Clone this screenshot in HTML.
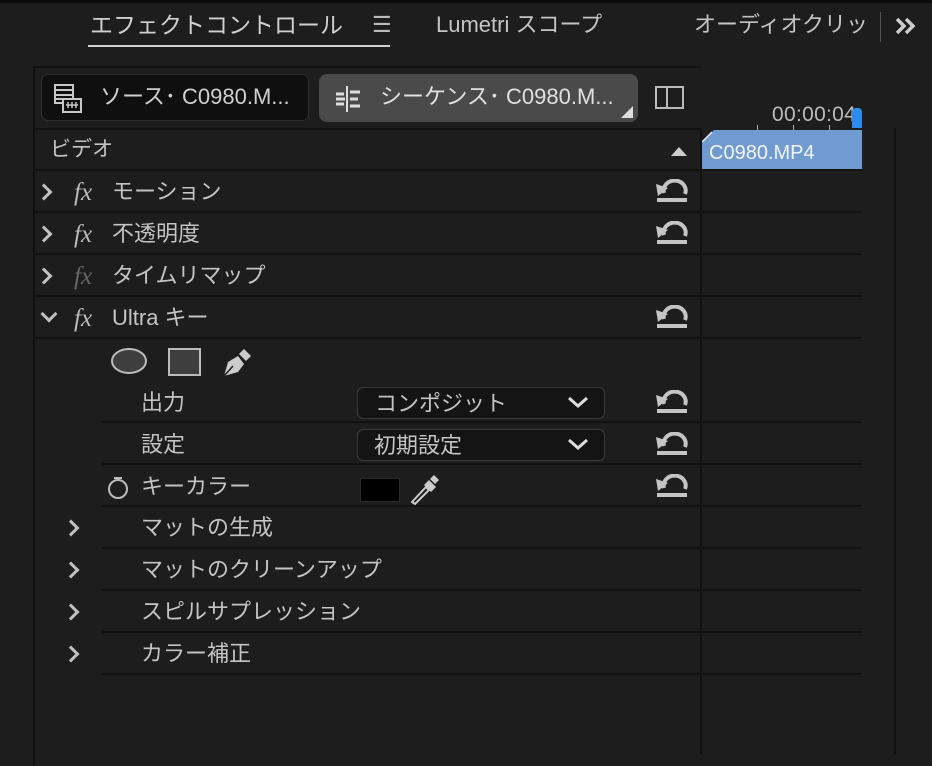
<!DOCTYPE html><html><head><meta charset="utf-8"><style>
body{margin:0;width:932px;height:754px;background:#1d1d1d;overflow:hidden;position:relative;font-family:"Liberation Sans","Noto Sans CJK JP",sans-serif;color:#c4c4c4}
.a{position:absolute}
.t{position:absolute;font-size:22px;white-space:nowrap;line-height:1}
.ln{position:absolute;height:2px;background:#121212}
.chev{position:absolute;width:9px;height:9px;border-right:3px solid #c0c0c0;border-bottom:3px solid #c0c0c0;transform:rotate(-45deg)}
.fx{position:absolute;font-family:"Liberation Serif",serif;font-style:italic;font-size:25px;color:#bbb}
.dd{position:absolute;left:357px;width:246px;height:30px;border:1px solid #3a3a3a;border-radius:6px;background:#141414}
</style></head><body>
<div class="a" style="left:0;top:0;width:932px;height:3px;background:#0b0b0b"></div>
<div class="t" style="left:90px;top:14px;font-size:23px;color:#d0d0d0">エフェクトコントロール</div>
<div class="t" style="left:372px;top:14px;font-size:22px;color:#bbb">☰</div>
<div class="a" style="left:88px;top:45px;width:302px;height:2px;background:#d0d0d0"></div>
<div class="t" style="left:436px;top:14px;font-size:22px">Lumetri スコープ</div>
<div class="t" style="left:694px;top:14px;font-size:22px">オーディオクリッ</div>
<div class="a" style="left:880px;top:12px;width:1px;height:30px;background:#555"></div>
<svg class="a" style="left:895px;top:17px" width="22" height="18"><path d="M2 2l7 7l-7 7M11 2l7 7l-7 7" fill="none" stroke="#ccc" stroke-width="3.5"/></svg>
<!-- panel -->
<div class="a" style="left:33px;top:66px;width:668px;height:700px;border-left:2px solid #111;border-top:2px solid #111;box-sizing:border-box"></div>
<div class="a" style="left:700px;top:128px;width:2px;height:626px;background:#111"></div>
<div class="a" style="left:894px;top:128px;width:2px;height:626px;background:#111"></div>
<!-- source button -->
<div class="a" style="left:41px;top:74px;width:268px;height:47px;background:#0f0f0f;border:1px solid #2d2d2d;border-radius:7px;box-sizing:border-box"></div>
<svg class="a" style="left:54px;top:84px" width="30" height="30"><rect x="1" y="1" width="18" height="18" fill="none" stroke="#c8c8c8" stroke-width="2"/><path d="M1 6h18M1 11h18M1 15h18" stroke="#c8c8c8" stroke-width="2"/><rect x="9" y="15" width="18" height="13" fill="#0f0f0f" stroke="#c8c8c8" stroke-width="2"/><path d="M12 21h12M14 18v6M18 18v6M22 18v6" stroke="#c8c8c8" stroke-width="1.5"/></svg>
<div class="t" style="left:100px;top:86px;font-size:22px;color:#d0d0d0">ソース･ C0980.M...</div>
<div class="a" style="left:319px;top:74px;width:319px;height:48px;background:#4a4a4a;border-radius:8px"></div>
<svg class="a" style="left:334px;top:84px" width="30" height="30"><path d="M13 2v26" stroke="#ddd" stroke-width="2"/><path d="M2 10h8M16 8h10M2 15h9M16 15h8M2 20h8M16 22h10" stroke="#ddd" stroke-width="3"/></svg>
<div class="t" style="left:380px;top:86px;font-size:22px;color:#e0e0e0">シーケンス･ C0980.M...</div>
<svg class="a" style="left:621px;top:106px" width="12" height="12"><path d="M0 12L12 0V12Z" fill="#ddd"/></svg>
<svg class="a" style="left:655px;top:86px" width="30" height="24"><rect x="1" y="1" width="27" height="21" fill="none" stroke="#bbb" stroke-width="2"/><path d="M12 1v21" stroke="#bbb" stroke-width="2"/></svg>
<!-- timeline -->
<div class="t" style="left:772px;top:104px;font-size:21px;color:#bbb;letter-spacing:0.3px">00:00:04</div>
<div class="a" style="left:852px;top:108px;width:10px;height:20px;background:#2d8ceb;border-radius:4px 4px 0 0"></div>
<div class="a" style="left:757px;top:125px;width:1px;height:6px;background:#aaa"></div>
<div class="a" style="left:793px;top:125px;width:1px;height:6px;background:#aaa"></div>
<div class="a" style="left:829px;top:125px;width:1px;height:6px;background:#aaa"></div>
<div class="a" style="left:702px;top:130px;width:160px;height:40px;background:#6f9bd1"></div>
<svg class="a" style="left:702px;top:130px" width="12" height="12"><path d="M0 0h12L0 12Z" fill="#1d1d1d"/><path d="M0 12L10 2" stroke="#eee" stroke-width="1.5"/></svg>
<div class="t" style="left:709px;top:143px;font-size:20px;color:#f4f4f4">C0980.MP4</div>
<!-- header -->
<div class="a" style="left:35px;top:128px;width:666px;height:2px;background:#111"></div>
<div class="t" style="left:50px;top:139px;font-size:21px">ビデオ</div>
<svg class="a" style="left:669px;top:145px" width="20" height="12"><path d="M2 11L10 2L18 11Z" fill="#ccc"/></svg>
<div class="ln" style="left:35px;top:169px;width:827px"></div>
<div class="ln" style="left:35px;top:211px;width:827px"></div>
<div class="ln" style="left:35px;top:253px;width:827px"></div>
<div class="ln" style="left:35px;top:295px;width:827px"></div>
<div class="ln" style="left:35px;top:337px;width:827px"></div>
<div class="ln" style="left:102px;top:421px;width:760px"></div>
<div class="ln" style="left:102px;top:463px;width:760px"></div>
<div class="ln" style="left:102px;top:505px;width:760px"></div>
<div class="ln" style="left:102px;top:547px;width:760px"></div>
<div class="ln" style="left:102px;top:589px;width:760px"></div>
<div class="ln" style="left:102px;top:631px;width:760px"></div>
<div class="ln" style="left:102px;top:673px;width:760px"></div>
<!-- rows -->
<div class="chev" style="left:38px;top:186px"></div><div class="fx" style="left:74px;top:179px">fx</div><div class="t" style="left:112px;top:181px">モーション</div>
<div class="chev" style="left:38px;top:228px"></div><div class="fx" style="left:74px;top:221px">fx</div><div class="t" style="left:112px;top:223px">不透明度</div>
<div class="chev" style="left:38px;top:270px"></div><div class="fx" style="left:74px;top:263px;color:#666">fx</div><div class="t" style="left:112px;top:265px">タイムリマップ</div>
<div class="chev" style="left:43px;top:308px;transform:rotate(45deg)"></div><div class="fx" style="left:74px;top:305px">fx</div><div class="t" style="left:112px;top:307px">Ultra キー</div>
<svg class="a" style="left:110px;top:346px" width="150" height="32"><ellipse cx="19" cy="15" rx="17" ry="12" fill="#3e3e3e" stroke="#bbb" stroke-width="2"/><rect x="59" y="3" width="31" height="26" fill="#3e3e3e" stroke="#bbb" stroke-width="2"/><path d="M114 30L118 16L128 10L134 18L128 26Z" fill="#ccc"/><path d="M129 8L134 3L141 10L136 15Z" fill="#ccc"/><path d="M114 30L123 20" stroke="#1d1d1d" stroke-width="1.5"/></svg>
<div class="t" style="left:141px;top:392px">出力</div>
<div class="dd" style="top:387px"></div><div class="t" style="left:375px;top:393px">コンポジット</div>
<div class="t" style="left:141px;top:434px">設定</div>
<div class="dd" style="top:429px"></div><div class="t" style="left:374px;top:435px">初期設定</div>
<svg class="a" style="left:566px;top:395px" width="24" height="14"><path d="M3 3l9 8l9-8" fill="none" stroke="#ddd" stroke-width="3"/></svg>
<svg class="a" style="left:566px;top:437px" width="24" height="14"><path d="M3 3l9 8l9-8" fill="none" stroke="#ddd" stroke-width="3"/></svg>
<svg class="a" style="left:106px;top:474px" width="24" height="26"><circle cx="12" cy="15" r="9" fill="none" stroke="#bbb" stroke-width="2"/><path d="M8 4h8" stroke="#bbb" stroke-width="2"/></svg>
<div class="t" style="left:141px;top:476px">キーカラー</div>
<div class="a" style="left:360px;top:478px;width:38px;height:22px;background:#000;border:1px solid #2a2a2a"></div>
<svg class="a" style="left:408px;top:474px" width="32" height="32"><path d="M4 28L18 13L21 16L7 30Z" fill="none" stroke="#ccc" stroke-width="2"/><path d="M16 11L21 6L28 13L23 18Z" fill="#ccc"/><path d="M22 5L26 1L31 6L27 10Z" fill="#ccc"/></svg>
<div class="chev" style="left:65px;top:522px"></div><div class="t" style="left:141px;top:517px">マットの生成</div>
<div class="chev" style="left:65px;top:564px"></div><div class="t" style="left:141px;top:559px">マットのクリーンアップ</div>
<div class="chev" style="left:65px;top:606px"></div><div class="t" style="left:141px;top:601px">スピルサプレッション</div>
<div class="chev" style="left:65px;top:648px"></div><div class="t" style="left:141px;top:643px">カラー補正</div>
<!-- reset icons -->
<svg class="a" style="left:655px;top:179px" width="34" height="24"><path d="M9 14A11 10 0 1 1 30 15" fill="none" stroke="#c4c4c4" stroke-width="4"/><path d="M1 5L13 9L3 17Z" fill="#c4c4c4"/><rect x="2" y="19" width="30" height="4" fill="#c4c4c4"/></svg>
<svg class="a" style="left:655px;top:221px" width="34" height="24"><path d="M9 14A11 10 0 1 1 30 15" fill="none" stroke="#c4c4c4" stroke-width="4"/><path d="M1 5L13 9L3 17Z" fill="#c4c4c4"/><rect x="2" y="19" width="30" height="4" fill="#c4c4c4"/></svg>
<svg class="a" style="left:655px;top:305px" width="34" height="24"><path d="M9 14A11 10 0 1 1 30 15" fill="none" stroke="#c4c4c4" stroke-width="4"/><path d="M1 5L13 9L3 17Z" fill="#c4c4c4"/><rect x="2" y="19" width="30" height="4" fill="#c4c4c4"/></svg>
<svg class="a" style="left:655px;top:390px" width="34" height="24"><path d="M9 14A11 10 0 1 1 30 15" fill="none" stroke="#c4c4c4" stroke-width="4"/><path d="M1 5L13 9L3 17Z" fill="#c4c4c4"/><rect x="2" y="19" width="30" height="4" fill="#c4c4c4"/></svg>
<svg class="a" style="left:655px;top:432px" width="34" height="24"><path d="M9 14A11 10 0 1 1 30 15" fill="none" stroke="#c4c4c4" stroke-width="4"/><path d="M1 5L13 9L3 17Z" fill="#c4c4c4"/><rect x="2" y="19" width="30" height="4" fill="#c4c4c4"/></svg>
<svg class="a" style="left:655px;top:474px" width="34" height="24"><path d="M9 14A11 10 0 1 1 30 15" fill="none" stroke="#c4c4c4" stroke-width="4"/><path d="M1 5L13 9L3 17Z" fill="#c4c4c4"/><rect x="2" y="19" width="30" height="4" fill="#c4c4c4"/></svg>
</body></html>
